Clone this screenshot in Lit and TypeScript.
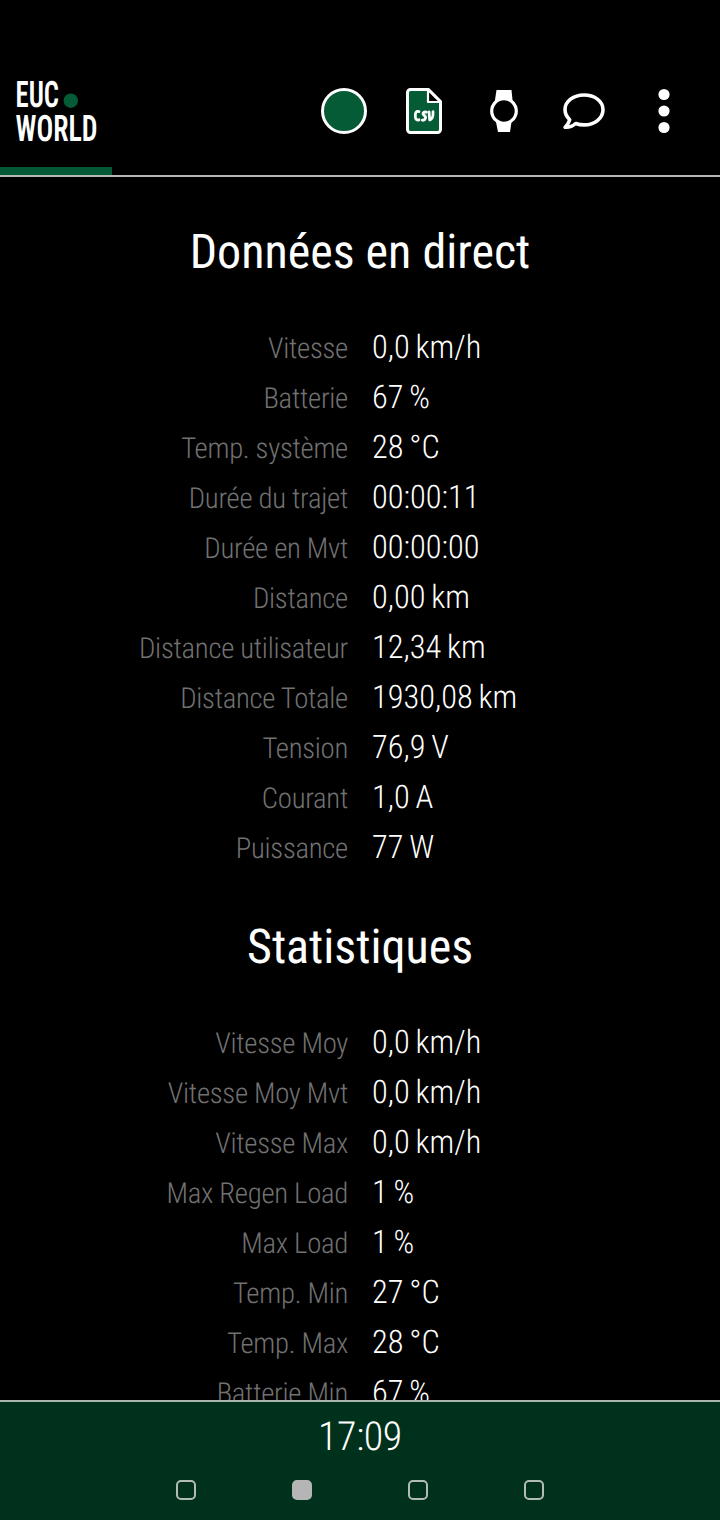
import { LitElement, html, css } from "lit";
import { customElement, property } from "lit/decorators.js";

type Row = [string, string];

const LIVE: Row[] = [
  ["Vitesse", "0,0 km/h"],
  ["Batterie", "67 %"],
  ["Temp. système", "28 °C"],
  ["Durée du trajet", "00:00:11"],
  ["Durée en Mvt", "00:00:00"],
  ["Distance", "0,00 km"],
  ["Distance utilisateur", "12,34 km"],
  ["Distance Totale", "1930,08 km"],
  ["Tension", "76,9 V"],
  ["Courant", "1,0 A"],
  ["Puissance", "77 W"],
];

const STATS: Row[] = [
  ["Vitesse Moy", "0,0 km/h"],
  ["Vitesse Moy Mvt", "0,0 km/h"],
  ["Vitesse Max", "0,0 km/h"],
  ["Max Regen Load", "1 %"],
  ["Max Load", "1 %"],
  ["Temp. Min", "27 °C"],
  ["Temp. Max", "28 °C"],
  ["Batterie Min", "67 %"],
];

@customElement("data-section")
export class DataSection extends LitElement {
  @property() heading = "";
  @property({ attribute: false }) rows: Row[] = [];

  static styles = css`
    :host { display: block; }
    .title {
      margin: 0;
      height: 56px;
      line-height: 56px;
      font-size: 48px;
      font-weight: 400;
      text-align: center;
      white-space: nowrap;
    }
    .rows { padding-top: 42px; }
    .row {
      display: grid;
      grid-template-columns: 348px 1fr;
      column-gap: 24px;
      height: 50px;
      align-items: baseline;
      white-space: nowrap;
      line-height: 50px;
    }
    .label {
      font-size: 28.8px;
      letter-spacing: -0.3px;
      font-weight: 300;
      color: #717171;
      text-align: right;
    }
    .value { font-size: 32.4px; word-spacing: -1.5px; font-weight: 300; }
  `;

  render() {
    return html`
      <h2 class="title">${this.heading}</h2>
      <div class="rows">
        ${this.rows.map(
          ([label, value]) => html`<div class="row">
            <span class="label">${label}</span><span class="value">${value}</span>
          </div>`
        )}
      </div>
    `;
  }
}

@customElement("app-root")
export class AppRoot extends LitElement {
  static styles = css`
    :host {
      display: flex;
      flex-direction: column;
      height: 1520px;
      width: 720px;
      overflow: hidden;
      background: #000;
      color: #fff;
      font-family: "Roboto Condensed", Roboto, sans-serif;
      font-stretch: condensed;
      text-rendering: geometricPrecision;
    }
    .header {
      flex: none;
      box-sizing: border-box;
      height: 177px;
      padding-top: 70px;
      border-bottom: 2px solid #b4bab6;
      display: flex;
      flex-direction: column;
      justify-content: space-between;
    }
    .bar { display: flex; justify-content: space-between; padding-right: 16px; }
    .logo { width: 112px; height: 80px; overflow: visible; }
    .actions { display: flex; }
    .action { width: 80px; height: 80px; }
    .tab { width: 112px; height: 8px; background: #045934; }
    .content {
      flex: 1;
      min-height: 0;
      overflow: hidden;
      padding-top: 47px;
      display: flex;
      flex-direction: column;
      gap: 47px;
    }
    .section { flex: none; }
    .footer {
      flex: none;
      box-sizing: border-box;
      height: 120px;
      border-top: 2px solid #a9b7ae;
      background: #00311c;
      display: flex;
      flex-direction: column;
      align-items: center;
    }
    .clock {
      margin-top: 10px;
      height: 50px;
      line-height: 50px;
      font-size: 40px;
      font-weight: 300;
      letter-spacing: -0.4px;
    }
    .pages { display: flex; gap: 96px; margin-top: 18px; }
    .page {
      box-sizing: border-box;
      width: 20px;
      height: 20px;
      border: 2px solid #b3bbb5;
      border-radius: 5px;
    }
    .current { background: #b5b5b5; border-color: #b5b5b5; }
  `;

  render() {
    return html`
      <header class="header">
        <div class="bar">
          <svg class="logo" viewBox="0 70 112 80" fill="#fff" font-weight="600" font-size="36.5">
            <text x="15.5" y="107" textLength="43.5" lengthAdjust="spacingAndGlyphs">EUC</text>
            <text x="15.5" y="140.7" textLength="82" lengthAdjust="spacingAndGlyphs">WORLD</text>
            <circle cx="70.8" cy="100.7" r="7.2" fill="#045b35" />
          </svg>
          <nav class="actions">
            <svg class="action" viewBox="304 70 80 80">
              <circle cx="344" cy="111" r="21.5" fill="#045b35" stroke="#fff" stroke-width="3" />
            </svg>
            <svg class="action" viewBox="384 70 80 80" stroke="#fff" stroke-width="3" stroke-linejoin="round">
              <path fill="#045b35" d="M410.5 89.5h18l12 12v28a3 3 0 0 1-3 3h-27a3 3 0 0 1-3-3v-37a3 3 0 0 1 3-3z" />
              <path fill="#000" stroke-width="2.2" d="M428 89.7v12.3h12.3z" />
              <g fill="none" stroke-width="2.8" stroke-linecap="round">
                <path d="M419 111.600c-3-.8-3.700 1.200-3.700 4.200s.7 4.800 3.700 4" />
                <path d="M426.300 112.200c-3.200-.8-4.300 1.800-2 3.300s1.300 5-2 4.700" />
                <path d="M429 111.800l.7 8.200c2.700-.6 3.600-3.800 3.300-8.300" />
              </g>
            </svg>
            <svg class="action" viewBox="464 70 80 80">
              <path fill="#fff" d="M496.500 90h15l1 10-1 22-1.500 10h-12l-2-10-1-22z" />
              <circle cx="504" cy="111" r="12.300" fill="#000" stroke="#fff" stroke-width="3.200" />
            </svg>
            <svg class="action" viewBox="544 70 80 80">
              <path fill="none" stroke="#fff" stroke-width="3.600" stroke-linejoin="round"
                d="M584 95c-10.500 0-19 6.300-19 14.500 0 4.200 1.800 7.400 4.700 10.200-.6 3-2.200 5.200-4.600 7.500 4.300.3 7.800-1.200 10.600-3.700 2.600.9 5.300 1.400 8.300 1.400 10.500 0 19-6.500 19-15.200S594.500 95 584 95z" />
            </svg>
            <svg class="action" viewBox="624 70 80 80" fill="#fff">
              <circle cx="664" cy="94.500" r="5.600" /><circle cx="664" cy="111" r="5.600" /><circle cx="664" cy="127.500" r="5.600" />
            </svg>
          </nav>
        </div>
        <div class="tab"></div>
      </header>
      <main class="content">
        <data-section class="section" heading="Données en direct" .rows=${LIVE}></data-section>
        <data-section class="section" heading="Statistiques" .rows=${STATS}></data-section>
      </main>
      <footer class="footer">
        <div class="clock">17:09</div>
        <div class="pages">
          ${[0, 1, 2, 3].map((i) => html`<span class=${i === 1 ? "page current" : "page"}></span>`)}
        </div>
      </footer>
    `;
  }
}
